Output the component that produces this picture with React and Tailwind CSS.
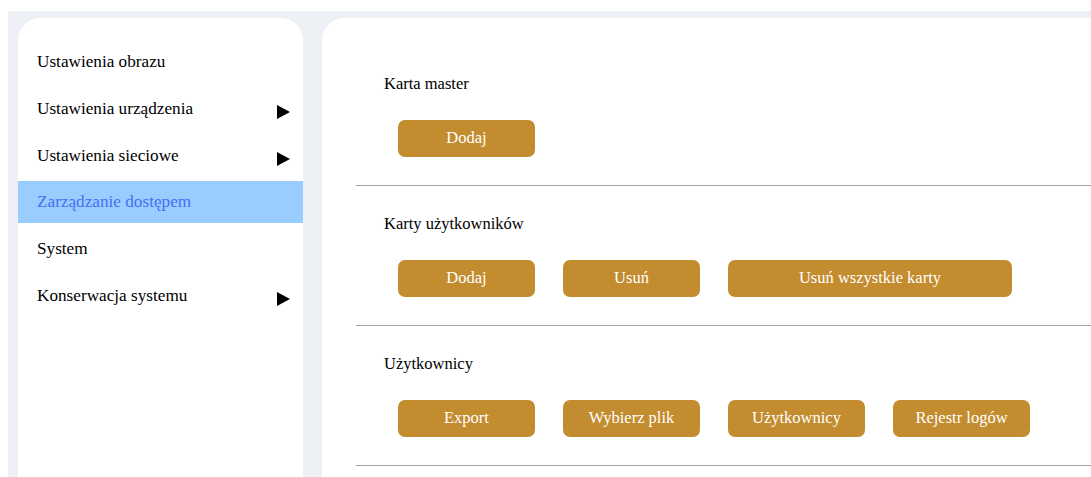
import React from "react";

const serif = { fontFamily: '"Liberation Serif", "Times New Roman", serif' };

const menu = [
  { label: "Ustawienia obrazu", arrow: false },
  { label: "Ustawienia urządzenia", arrow: true },
  { label: "Ustawienia sieciowe", arrow: true },
  { label: "Zarządzanie dostępem", arrow: false, active: true },
  { label: "System", arrow: false },
  { label: "Konserwacja systemu", arrow: true },
];

const sections = [
  { title: "Karta master", buttons: [["Dodaj", 137]] },
  {
    title: "Karty użytkowników",
    buttons: [
      ["Dodaj", 137],
      ["Usuń", 137],
      ["Usuń wszystkie karty", 284],
    ],
  },
  {
    title: "Użytkownicy",
    buttons: [
      ["Export", 137],
      ["Wybierz plik", 137],
      ["Użytkownicy", 137],
      ["Rejestr logów", 137],
    ],
  },
];

function Arrow() {
  return (
    <svg width="13" height="14" viewBox="0 0 13 14" className="mt-[6px]">
      <polygon points="0,0 13,7 0,14" fill="#000" />
    </svg>
  );
}

function GoldButton({ label, width }) {
  return (
    <button
      className="h-[37px] rounded-[7px] bg-[#c38c2f] text-[16.5px] text-white leading-none shrink-0"
      style={{ ...serif, width }}
    >
      {label}
    </button>
  );
}

export default function App() {
  return (
    <div className="bg-white pt-[11px] pl-[8px] h-[477px] overflow-hidden" style={serif}>
      <div className="flex h-full bg-[#edf0f5] pt-[7px] pl-[10px]">
        <aside className="w-[285px] shrink-0 rounded-t-[22px] bg-white pt-[23px] flex flex-col gap-[4.8px]">
          {menu.map((m) => (
            <div
              key={m.label}
              className={
                "h-[42px] flex items-center justify-between pl-[19px] pr-[13px] text-[17.2px] " +
                (m.active ? "bg-[#99ccff] text-[#4a6ef5]" : "text-black")
              }
            >
              <span>{m.label}</span>
              {m.arrow && <Arrow />}
            </div>
          ))}
        </aside>
        <main className="ml-[19px] flex-1 rounded-tl-[22px] bg-white pt-[55px]">
          {sections.map((s, i) => (
            <section key={s.title}>
              {i > 0 && <div className="h-[27px]" />}
              <div className="pl-[62px] text-[16.5px] leading-[22px] text-black">{s.title}</div>
              <div className="mt-[25px] pl-[76px] flex gap-[28px]">
                {s.buttons.map(([label, w]) => (
                  <GoldButton key={label} label={label} width={w} />
                ))}
              </div>
              <div className="mt-[28px] ml-[34px] border-t border-[#a3a3a3]" />
            </section>
          ))}
        </main>
      </div>
    </div>
  );
}
